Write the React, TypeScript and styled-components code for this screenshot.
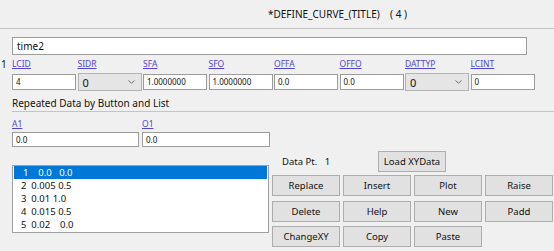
import React from "react";
import styled, { createGlobalStyle } from "styled-components";

const Global = createGlobalStyle`
  html, body { margin: 0; padding: 0; background: #f0f0f0; }
  body { font-family: "Noto Sans", "Open Sans", sans-serif; color: #111; }
  * { box-sizing: border-box; }
`;

const Page = styled.div`
  width: 554px;
  height: 251px;
  overflow: hidden;
  background: #f0f0f0;
  display: flex;
  flex-direction: column;
`;

const Header = styled.div`
  height: 29px;
  padding-left: 268px;
  font-size: 10px;
  line-height: 28px;
  border-bottom: 1px solid #c4c4c4;
  white-space: pre;
`;

const TitleInput = styled.div`
  margin: 8px 0 0 12px;
  width: 515px;
  height: 18px;
  background: #fff;
  border: 1px solid #9c9c9c;
  font-size: 10px;
  line-height: 16px;
  padding-left: 4px;
`;

const FieldBlock = styled.div`
  display: flex;
  margin-top: 2px;
`;

const RowIndex = styled.div`
  width: 12px;
  padding-left: 1px;
  font-size: 10px;
  line-height: 14px;
`;

const FieldGrid = styled.div`
  display: grid;
  grid-template-columns: repeat(8, 64px);
  column-gap: 1.5px;
  grid-template-rows: 14px 18px;
  row-gap: 2px;
  align-items: center;
`;

const LinkLabel = styled.span`
  font-size: 8.5px;
  line-height: 14px;
  color: #5244d4;
  text-decoration: underline;
  justify-self: start;
`;

const TextBox = styled.div<{ $h?: number }>`
  height: ${(p) => p.$h ?? 16}px;
  background: #fff;
  border: 1px solid #9c9c9c;
  font-size: 8px;
  line-height: ${(p) => (p.$h ?? 16) - 2}px;
  padding-left: 3px;
`;

const Select = styled.div`
  height: 18px;
  background: #e5e5e5;
  border: 1px solid #b4b4b4;
  display: flex;
  align-items: center;
  justify-content: space-between;
  padding: 0 6px 0 4px;
  font-size: 11px;
`;

const Chevron = () => (
  <svg width="7" height="4" viewBox="0 0 7 4">
    <path d="M0.5 0.5 L3.5 3.3 L6.5 0.5" stroke="#606060" strokeWidth="0.9" fill="none" />
  </svg>
);

const SectionTitle = styled.div`
  margin: 4px 0 0 12px;
  height: 17px;
  font-size: 10px;
  line-height: 16px;
  border-bottom: 1px solid #c4c4c4;
`;

const PairGrid = styled.div`
  display: grid;
  grid-template-columns: 127px 128px;
  column-gap: 3px;
  grid-template-rows: 14px 15px;
  row-gap: 1px;
  margin: 5px 0 0 12px;
`;

const Bottom = styled.div`
  display: flex;
  margin: 3px 0 0 12px;
`;

const ListBox = styled.div`
  margin-top: 15px;
  width: 257px;
  height: 68px;
  background: #fff;
  border: 1px solid #a0a0a0;
  padding: 0 1px;
  display: flex;
  flex-direction: column;
`;

const ListRow = styled.div<{ $sel?: boolean }>`
  height: 13px;
  font-size: 9.5px;
  line-height: 13px;
  white-space: pre;
  padding-left: ${(p) => (p.$sel ? 9 : 7)}px;
  background: ${(p) => (p.$sel ? "#0078d7" : "transparent")};
  color: ${(p) => (p.$sel ? "#fff" : "#111")};
`;

const RightPanel = styled.div`
  margin-left: 3px;
  display: flex;
  flex-direction: column;
`;

const DataRow = styled.div`
  display: flex;
  align-items: center;
  height: 22px;
`;

const DataLabel = styled.span`
  width: 106px;
  padding-left: 10px;
  font-size: 9.5px;
  white-space: pre;
`;

const Button = styled.div<{ $w?: number }>`
  width: ${(p) => p.$w ?? 68}px;
  height: 21px;
  background: #e1e1e1;
  border: 1px solid #adadad;
  display: flex;
  align-items: center;
  justify-content: center;
  font-size: 9.5px;
`;

const ButtonGrid = styled.div`
  margin-top: 3px;
  display: grid;
  grid-template-columns: repeat(4, 68px);
  column-gap: 3px;
  row-gap: 4.5px;
`;

const columns: { label: string; kind: "text" | "select"; value: string }[] = [
  { label: "LCID", kind: "text", value: "4" },
  { label: "SIDR", kind: "select", value: "0" },
  { label: "SFA", kind: "text", value: "1.0000000" },
  { label: "SFO", kind: "text", value: "1.0000000" },
  { label: "OFFA", kind: "text", value: "0.0" },
  { label: "OFFO", kind: "text", value: "0.0" },
  { label: "DATTYP", kind: "select", value: "0" },
  { label: "LCINT", kind: "text", value: "0" },
];

const rows = [
  "1    0.0   0.0",
  "2  0.005 0.5",
  "3  0.01 1.0",
  "4  0.015 0.5",
  "5  0.02    0.0",
];

const buttons = ["Replace", "Insert", "Plot", "Raise", "Delete", "Help", "New", "Padd", "ChangeXY", "Copy", "Paste"];

export default function App() {
  return (
    <Page>
      <Global />
      <Header>{"*DEFINE_CURVE_(TITLE)    ( 4 )"}</Header>
      <TitleInput>time2</TitleInput>
      <FieldBlock>
        <RowIndex>1</RowIndex>
        <FieldGrid>
          {columns.map((c) => (
            <LinkLabel key={c.label}>{c.label}</LinkLabel>
          ))}
          {columns.map((c) =>
            c.kind === "select" ? (
              <Select key={c.label + "v"}>
                <span>{c.value}</span>
                <Chevron />
              </Select>
            ) : (
              <TextBox key={c.label + "v"}>{c.value}</TextBox>
            )
          )}
        </FieldGrid>
      </FieldBlock>
      <SectionTitle>Repeated Data by Button and List</SectionTitle>
      <PairGrid>
        <LinkLabel>A1</LinkLabel>
        <LinkLabel>O1</LinkLabel>
        <TextBox $h={15}>0.0</TextBox>
        <TextBox $h={15}>0.0</TextBox>
      </PairGrid>
      <Bottom>
        <ListBox>
          {rows.map((r, i) => (
            <ListRow key={i} $sel={i === 0}>
              {r}
            </ListRow>
          ))}
        </ListBox>
        <RightPanel>
          <DataRow>
            <DataLabel>{"Data Pt.   1"}</DataLabel>
            <Button $w={68}>Load XYData</Button>
          </DataRow>
          <ButtonGrid>
            {buttons.map((b) => (
              <Button key={b}>{b}</Button>
            ))}
          </ButtonGrid>
        </RightPanel>
      </Bottom>
    </Page>
  );
}
